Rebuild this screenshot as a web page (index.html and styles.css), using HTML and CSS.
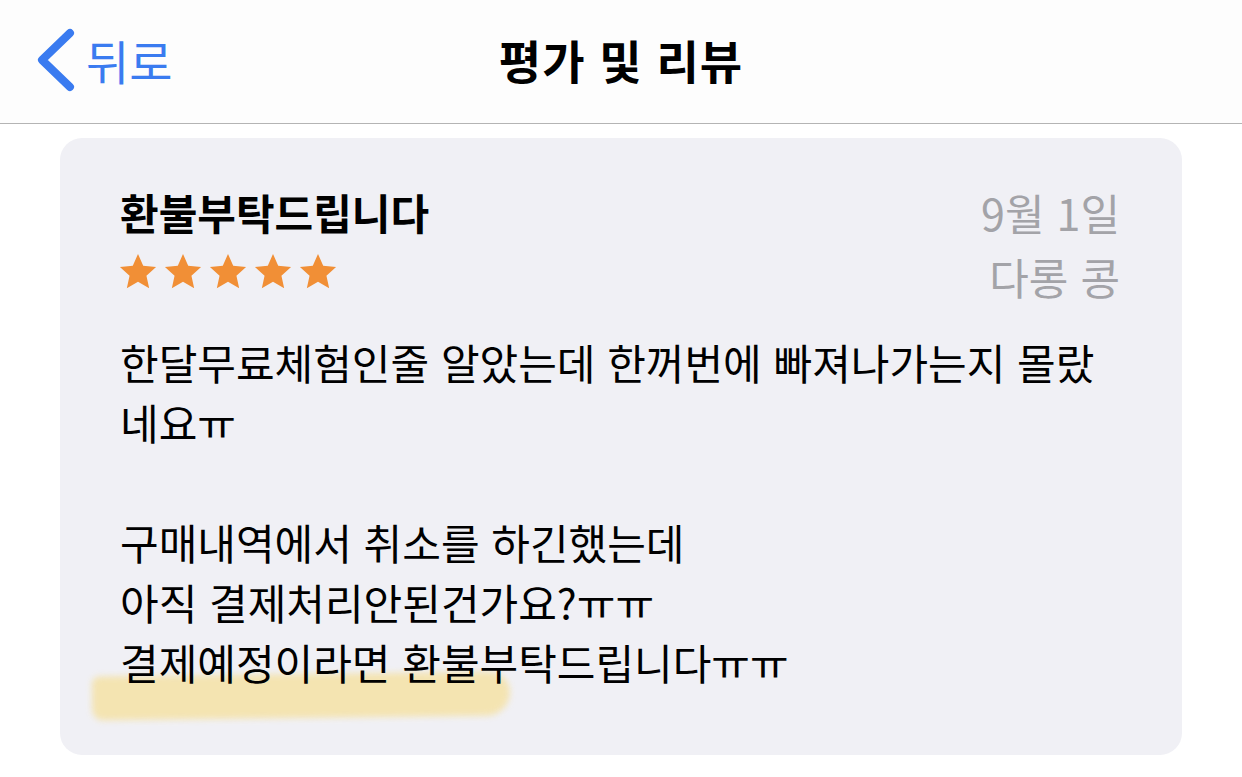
FILE: index.html
```html
<!DOCTYPE html>
<html lang="ko">
<head>
    <meta charset="UTF-8">
    <meta name="viewport" content="width=device-width, initial-scale=1.0">
    <title>평가 및 리뷰</title>
    <link rel="stylesheet" href="styles.css">
</head>
<body>

<header class="nav-bar">
    <a class="back-btn" href="#">
        <svg class="chevron" width="44" height="66" viewBox="0 0 44 66">
            <path d="M36 6 L8 33 L36 60" fill="none" stroke="#3a7bf0" stroke-width="8" stroke-linecap="round" stroke-linejoin="round"/>
        </svg>
        <span>뒤로</span>
    </a>
    <h1 class="nav-title">평가 및 리뷰</h1>
</header>

<!-- Review Card -->
<div class="review-card">
    <div class="review-head">
        <div>
            <h2 class="review-title">환불부탁드립니다</h2>
            <div class="stars">
                <svg width="38" height="38" viewBox="0 0 24 24"><path d="M12 0.6L15.29 8.07 23.41 8.89 17.33 14.33 19.05 22.31 12 18.2 4.95 22.31 6.67 14.33 0.59 8.89 8.71 8.07Z" fill="#f18f36"/></svg>
                <svg width="38" height="38" viewBox="0 0 24 24"><path d="M12 0.6L15.29 8.07 23.41 8.89 17.33 14.33 19.05 22.31 12 18.2 4.95 22.31 6.67 14.33 0.59 8.89 8.71 8.07Z" fill="#f18f36"/></svg>
                <svg width="38" height="38" viewBox="0 0 24 24"><path d="M12 0.6L15.29 8.07 23.41 8.89 17.33 14.33 19.05 22.31 12 18.2 4.95 22.31 6.67 14.33 0.59 8.89 8.71 8.07Z" fill="#f18f36"/></svg>
                <svg width="38" height="38" viewBox="0 0 24 24"><path d="M12 0.6L15.29 8.07 23.41 8.89 17.33 14.33 19.05 22.31 12 18.2 4.95 22.31 6.67 14.33 0.59 8.89 8.71 8.07Z" fill="#f18f36"/></svg>
                <svg width="38" height="38" viewBox="0 0 24 24"><path d="M12 0.6L15.29 8.07 23.41 8.89 17.33 14.33 19.05 22.31 12 18.2 4.95 22.31 6.67 14.33 0.59 8.89 8.71 8.07Z" fill="#f18f36"/></svg>
            </div>
        </div>
        <div class="review-meta">
            <div>9월 1일</div>
            <div>다롱 콩</div>
        </div>
    </div>
    <div class="review-body">
        <div class="marker"></div>
        <p>한달무료체험인줄 알았는데 한꺼번에 빠져나가는지 몰랐<br>네요ㅠ</p>
        <p>구매내역에서 취소를 하긴했는데<br>아직 결제처리안된건가요?ㅠㅠ<br>결제예정이라면 환불부탁드립니다ㅠㅠ</p>
    </div>
</div>

</body>
</html>
```

FILE: styles.css
```css
/* General Body Styling */
body {
    font-family: "Noto Sans CJK KR", "Noto Sans", sans-serif;
    background-color: #fff;
    color: #000;
    margin: 0;
    padding: 0;
}

/* Navigation Bar */
.nav-bar {
    height: 123px;
    background: #fdfdfd;
    border-bottom: 1px solid #b4b4b4;
    display: flex;
    align-items: center;
    justify-content: center;
    position: relative;
}

.back-btn {
    position: absolute;
    left: 34px;
    top: 25px;
    display: flex;
    align-items: center;
    gap: 8px;
    color: #3a7bf0;
    text-decoration: none;
    font-size: 47px;
}

.nav-title {
    margin: 0;
    font-size: 46px;
    font-weight: bold;
    letter-spacing: 1px;
    padding-bottom: 6px;
}

/* Review Card */
.review-card {
    background: #f0f0f5;
    border-radius: 22px;
    margin: 14px 60px 0 60px;
    height: 617px;
    box-sizing: border-box;
    padding: 42px 62px 0 60px;
    position: relative;
}

.review-head {
    display: flex;
    justify-content: space-between;
}

.review-title {
    margin: 0;
    font-size: 42px;
    font-weight: bold;
    line-height: 64px;
}

.stars {
    display: flex;
    gap: 7px;
    height: 56px;
    align-items: center;
    margin-left: -1px;
}

.review-meta {
    text-align: right;
    color: #a3a3a8;
    font-size: 43px;
    line-height: 64px;
}

.review-body {
    margin-top: 24px;
    font-size: 42px;
    line-height: 60px;
    position: relative;
}

.review-body p {
    margin: 0 0 60px 0;
    position: relative;
}

/* Highlighter stroke under the last line */
.marker {
    position: absolute;
    left: -28px;
    top: 342px;
    width: 418px;
    height: 44px;
    background: #f5e2a6;
    opacity: 0.85;
    border-radius: 10px 26px 30px 14px;
    filter: blur(3px);
    transform: rotate(-0.7deg);
}
```
